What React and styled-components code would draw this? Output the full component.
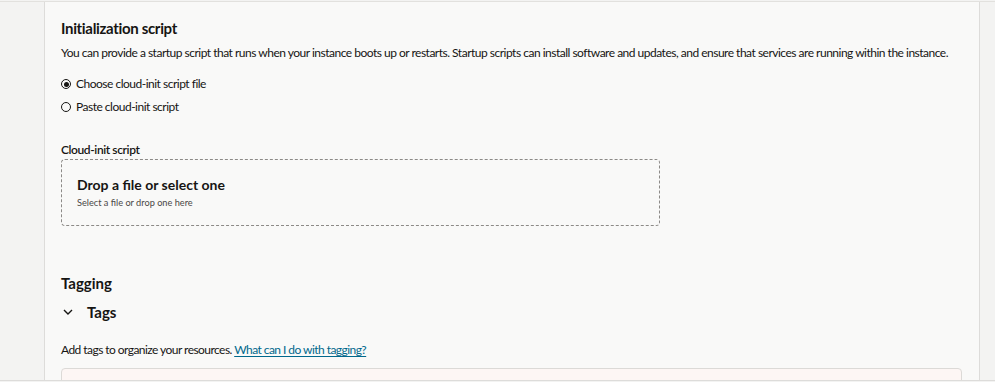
import React from "react";
import styled, { createGlobalStyle } from "styled-components";

const GlobalStyle = createGlobalStyle`
  html, body {
    margin: 0;
    padding: 0;
    background: #f1f1f0;
  }
  body {
    font-family: Lato, "Liberation Sans", sans-serif;
    color: #161513;
  }
`;

const Frame = styled.div`
  height: 382px;
  overflow: hidden;
  background: #f3f3f2;
`;

const Body = styled.div`
  box-sizing: border-box;
  height: 380px;
  margin-top: 1px;
  display: flex;
  border-top: 1px solid #e2e1de;
  border-bottom: 1px solid #dddcda;
`;

const Gutter = styled.div`
  box-sizing: border-box;
  width: ${({ w }) => w}px;
  flex-shrink: 0;
  background: #f3f3f2;
  border-left: ${({ side }) => (side === "right" ? "1px solid #dddcda" : "none")};
  border-right: ${({ side }) => (side === "left" ? "1px solid #dddcda" : "none")};
`;

const Panel = styled.div`
  flex: 1;
  background: #f9f9f8;
  padding: 16px 17px 0 16px;
  overflow: hidden;
`;

const SectionTitle = styled.h2`
  margin: ${({ top }) => top || 0}px 0 0;
  font-size: 15px;
  line-height: 20px;
  font-weight: 700;
  letter-spacing: ${({ tight }) => (tight ? "-0.33px" : "0")};
`;

const Text = styled.p`
  margin: ${({ top }) => top || 0}px 0 0;
  font-size: 12px;
  line-height: 16px;
  letter-spacing: ${({ track }) => track || -0.5}px;
  white-space: nowrap;
`;

const Link = styled.a`
  color: #00688c;
  text-decoration: underline;
  text-underline-offset: 2px;
  cursor: pointer;
`;

const RadioGroup = styled.div`
  margin-top: 13px;
  display: flex;
  flex-direction: column;
  gap: 3px;
`;

const RadioRow = styled.label`
  display: flex;
  align-items: center;
  gap: 5px;
  font-size: 12px;
  line-height: 20px;
  letter-spacing: -0.5px;
`;

const RadioDot = styled.span`
  box-sizing: border-box;
  width: 10px;
  height: 10px;
  border-radius: 50%;
  border: 1px solid #161513;
  display: flex;
  align-items: center;
  justify-content: center;
  &::after {
    content: "";
    width: 5px;
    height: 5px;
    border-radius: 50%;
    background: ${({ checked }) => (checked ? "#161513" : "transparent")};
  }
`;

const FieldLabel = styled.div`
  margin-top: 25px;
  font-size: 12px;
  line-height: 16px;
  font-weight: 600;
  letter-spacing: -0.4px;
`;

const DropZone = styled.div`
  box-sizing: border-box;
  margin-top: 1px;
  width: 599px;
  height: 67px;
  border: 1px dashed #8c8a87;
  border-radius: 4px;
  padding: 16px 15px 0;
`;

const DropTitle = styled.div`
  font-size: 14px;
  line-height: 18px;
  font-weight: 700;
`;

const DropHint = styled.div`
  margin-top: 3px;
  font-size: 9.2px;
  line-height: 12px;
  color: #4a4846;
`;

const Collapsible = styled.div`
  margin-top: 9px;
  display: flex;
  align-items: center;
  gap: 14px;
  padding-left: 2px;
`;

const CollapseTitle = styled.span`
  font-size: 15px;
  line-height: 20px;
  font-weight: 700;
`;

const TagBox = styled.div`
  margin-top: 10px;
  height: 40px;
  border: 1px solid #dcdad7;
  border-radius: 4px 4px 0 0;
  background: #fdf6f4;
`;

const Chevron = () => (
  <svg width="10" height="6" viewBox="0 0 10 6" fill="none">
    <path d="M1 1l4 4 4-4" stroke="#161513" strokeWidth="1.4" />
  </svg>
);

export default function App() {
  return (
    <Frame>
      <GlobalStyle />
      <Body>
        <Gutter w={45} side="left" />
        <Panel>
          <SectionTitle tight>Initialization script</SectionTitle>
          <Text top={7}>
            You can provide a startup script that runs when your instance boots up or restarts. Startup scripts can
            install software and updates, and ensure that services are running within the instance.
          </Text>
          <RadioGroup>
            <RadioRow>
              <RadioDot checked />
              Choose cloud-init script file
            </RadioRow>
            <RadioRow>
              <RadioDot />
              Paste cloud-init script
            </RadioRow>
          </RadioGroup>
          <FieldLabel>Cloud-init script</FieldLabel>
          <DropZone>
            <DropTitle>Drop a file or select one</DropTitle>
            <DropHint>Select a file or drop one here</DropHint>
          </DropZone>
          <SectionTitle top={47}>Tagging</SectionTitle>
          <Collapsible>
            <Chevron />
            <CollapseTitle>Tags</CollapseTitle>
          </Collapsible>
          <Text top={20} track={-0.55}>
            Add tags to organize your resources. <Link>What can I do with tagging?</Link>
          </Text>
          <TagBox />
        </Panel>
        <Gutter w={16} side="right" />
      </Body>
    </Frame>
  );
}
